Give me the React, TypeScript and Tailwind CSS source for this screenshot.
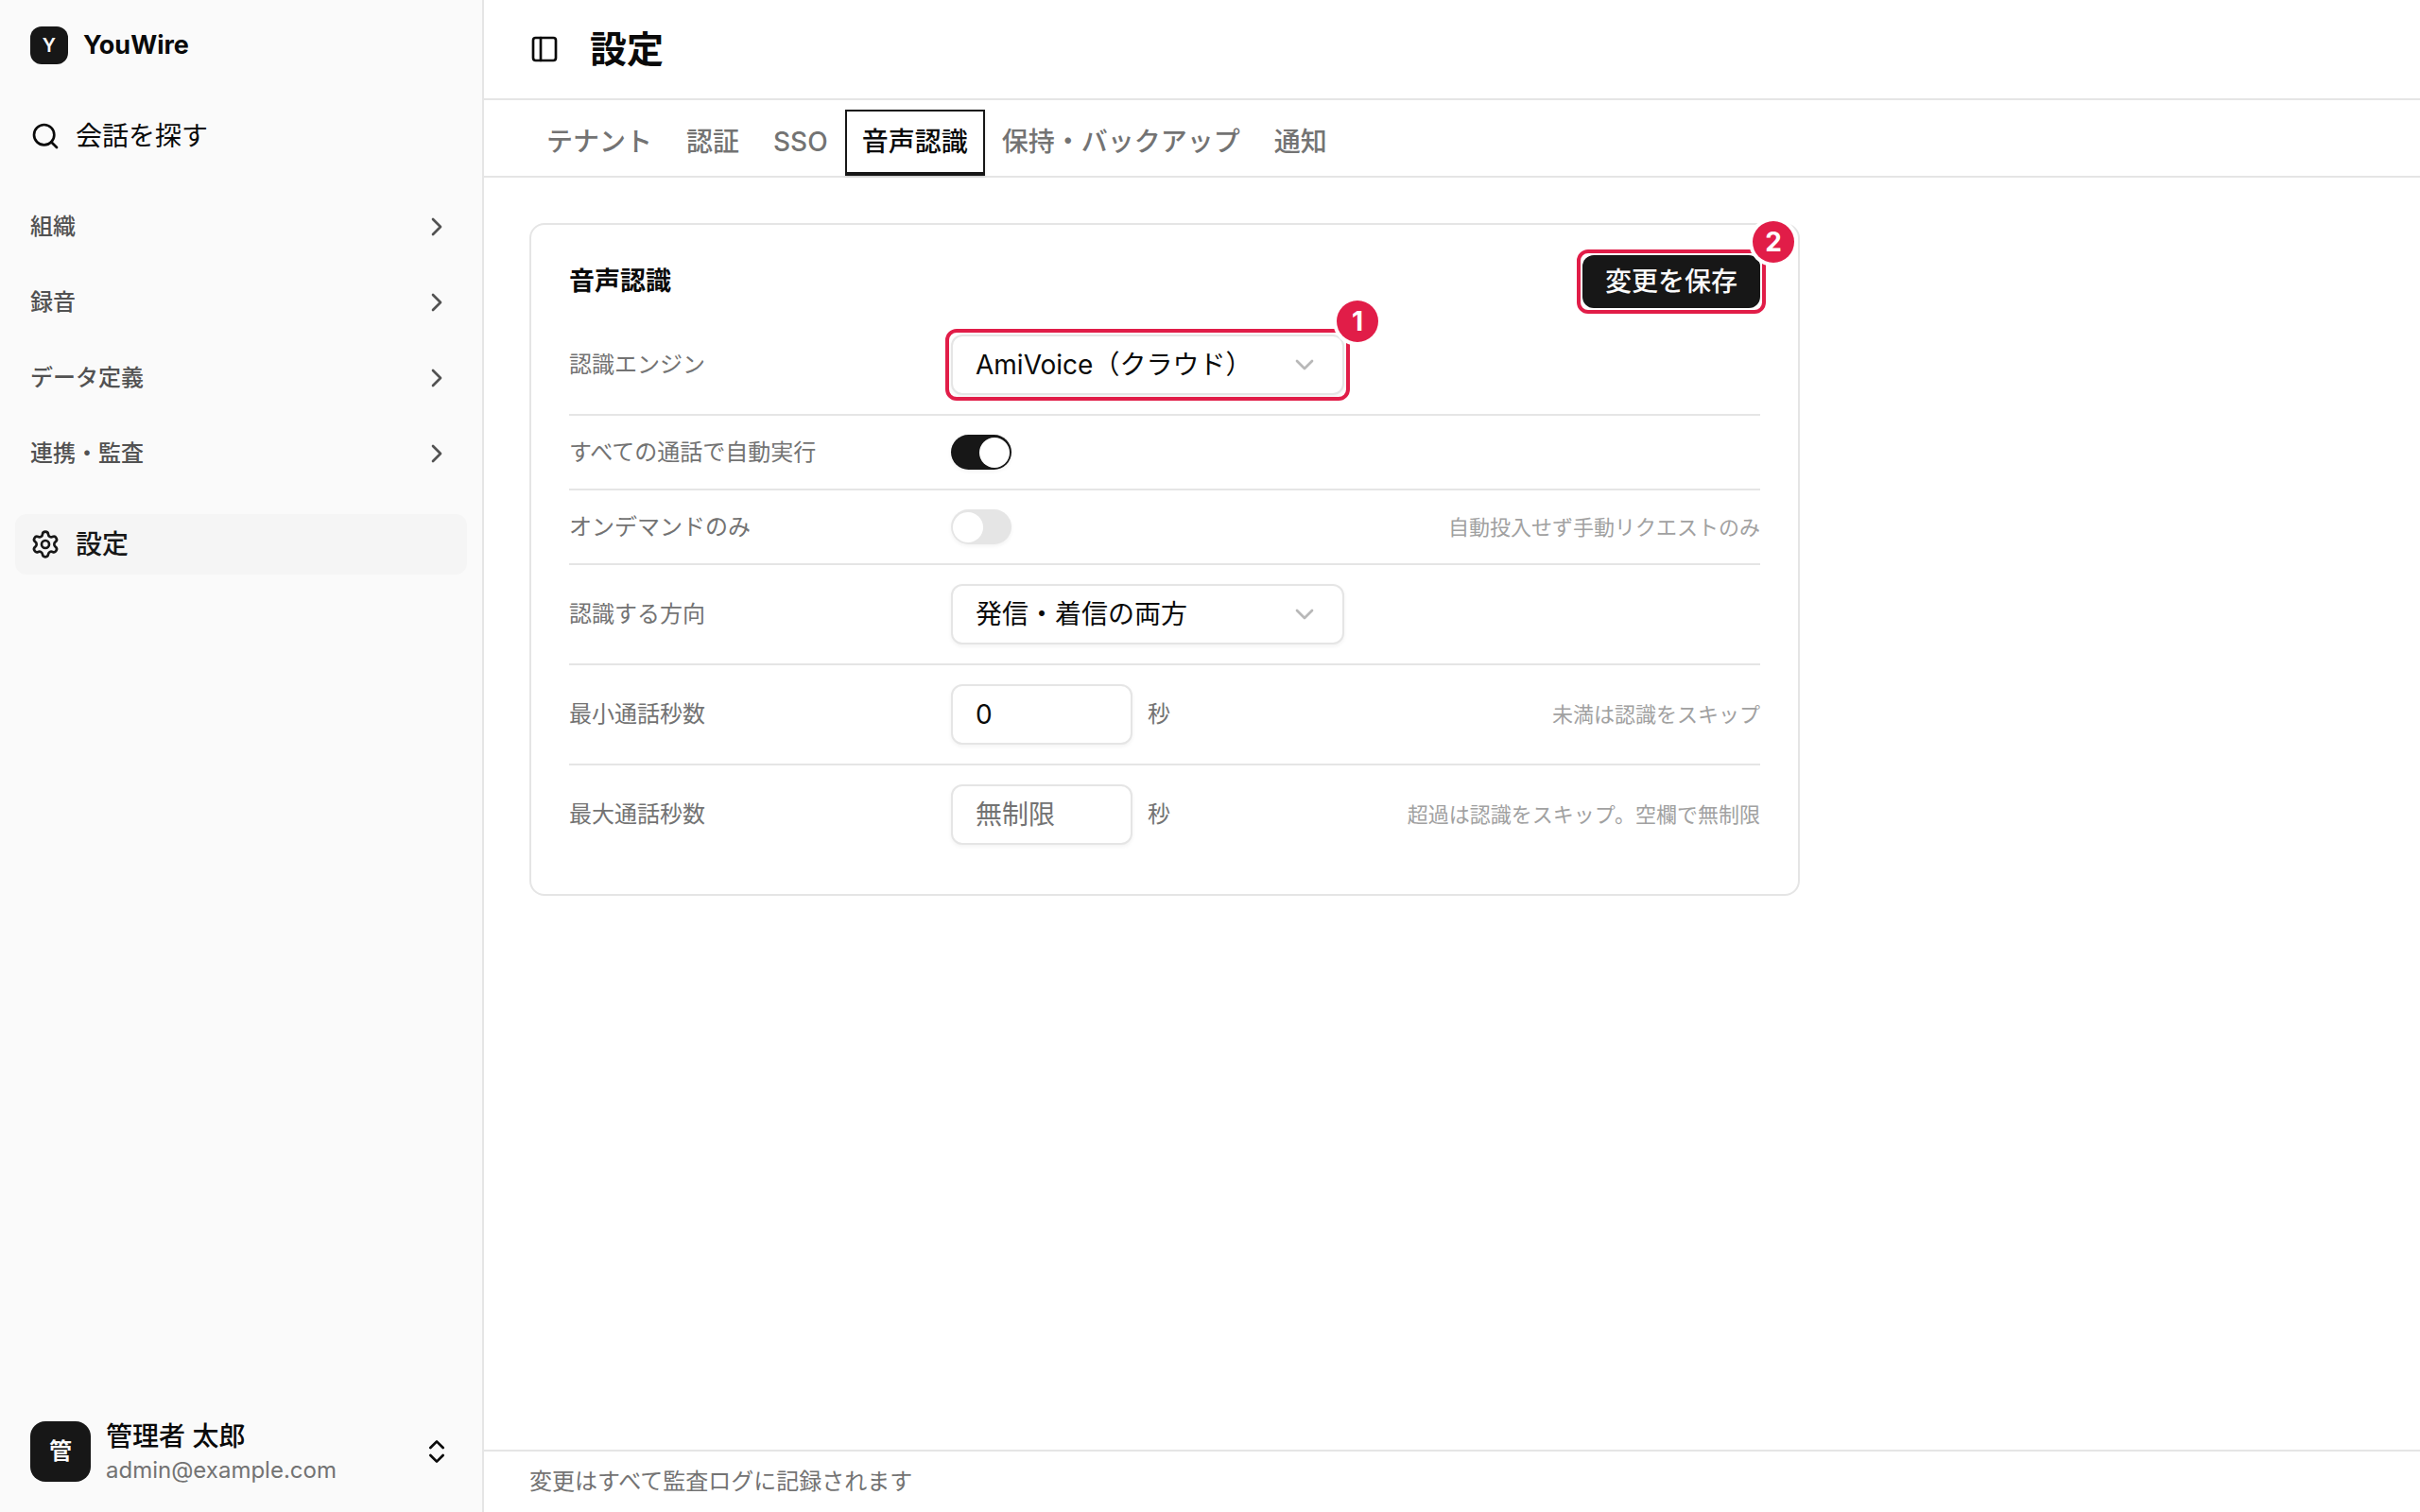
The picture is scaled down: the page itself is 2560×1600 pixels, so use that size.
import { useState } from "react";
import type { ReactNode } from "react";
import { ChevronDown, ChevronRight, ChevronsUpDown, PanelLeft, Search, Settings } from "lucide-react";

const groups = ["組織", "録音", "データ定義", "連携・監査"];
const tabs = ["テナント", "認証", "SSO", "音声認識", "保持・バックアップ", "通知"];

const Sidebar = () => {
    return (
        <aside className="flex w-128 shrink-0 flex-col border-r-2 border-neutral-200 bg-neutral-50">
            <div className="flex h-24 items-center gap-4 px-8">
                <div className="flex size-10 items-center justify-center rounded-xl bg-neutral-900 text-[20px] font-semibold text-neutral-50">Y</div>
                <span className="text-[27px] font-bold">YouWire</span>
            </div>
            <nav className="flex flex-1 flex-col gap-8 p-4">
                <a href="#search" className="flex h-16 items-center gap-4 rounded-xl px-4">
                    <Search className="size-8" />
                    <span>会話を探す</span>
                </a>
                <div className="flex flex-col gap-4">
                    {groups.map((name) => (
                        <button key={name} type="button" className="flex h-16 items-center justify-between px-4 text-2xl font-medium text-neutral-600">
                            {name}
                            <ChevronRight className="size-8" />
                        </button>
                    ))}
                </div>
                <a href="#settings" className="flex h-16 items-center gap-4 rounded-xl bg-neutral-100 px-4 font-medium text-neutral-900">
                    <Settings className="size-8" />
                    <span>設定</span>
                </a>
            </nav>
            <button type="button" className="flex h-32 items-center gap-4 px-8 text-left">
                <span className="flex size-16 items-center justify-center rounded-2xl bg-neutral-900 text-2xl font-semibold text-neutral-50">管</span>
                <span className="flex flex-1 flex-col">
                    <span className="leading-10 font-medium">管理者 太郎</span>
                    <span className="text-2xl leading-8 text-neutral-500">admin@example.com</span>
                </span>
                <ChevronsUpDown className="size-8" />
            </button>
        </aside>
    );
};

// red frame with a numbered badge around a control
const Callout = ({ no, children }: { no: number; children: ReactNode }) => {
    return (
        <div className="relative">
            {children}
            <div className="pointer-events-none absolute -inset-1.5 rounded-xl border-4 border-[#e11d48]" />
            <span className="absolute -top-9 -right-9 flex size-11 items-center justify-center rounded-full bg-[#e11d48] font-bold text-white ring-4 ring-white">{no}</span>
        </div>
    );
};

interface RowProps {
    id: string;
    label: string;
    hint?: string;
    children: ReactNode;
}

const Row = ({ id, label, hint, children }: RowProps) => {
    return (
        <div className="flex items-center gap-6 border-b-2 border-neutral-200 py-5 last:border-b-0">
            <label htmlFor={id} className="w-95 shrink-0 text-2xl text-neutral-500">{label}</label>
            <div className="flex items-center gap-4">{children}</div>
            {hint && <p className="ml-auto text-[22px] leading-8 text-neutral-400">{hint}</p>}
        </div>
    );
};

const SelectBox = ({ id, options }: { id: string; options: string[] }) => {
    return (
        <div className="relative w-104">
            <select id={id} className="block h-16 w-full appearance-none rounded-xl border-2 border-neutral-200 bg-white pr-16 pl-6 shadow-[0_2px_4px_rgba(0,0,0,0.05)]">
                {options.map((option) => (
                    <option key={option}>{option}</option>
                ))}
            </select>
            <ChevronDown className="pointer-events-none absolute top-4 right-6.5 size-8 text-neutral-500 opacity-50" />
        </div>
    );
};

const Toggle = ({ id, on }: { id: string; on: boolean }) => {
    const [checked, setChecked] = useState(on);

    return (
        <input
            id={id}
            type="checkbox"
            role="switch"
            checked={checked}
            onChange={(e) => setChecked(e.target.checked)}
            className="flex h-[37px] w-16 appearance-none items-center rounded-full bg-neutral-200 px-0.5 shadow-[0_2px_4px_rgba(0,0,0,0.05)] before:size-8 before:rounded-full before:bg-white checked:justify-end checked:bg-neutral-900"
        />
    );
};

const SecondsInput = ({ id, value, placeholder }: { id: string; value?: string; placeholder?: string }) => {
    return (
        <>
            <input id={id} type="text" inputMode="numeric" defaultValue={value} placeholder={placeholder} className="h-16 w-48 rounded-xl border-2 border-neutral-200 bg-white px-6 shadow-[0_2px_4px_rgba(0,0,0,0.05)] placeholder:text-neutral-500" />
            <span className="text-2xl text-neutral-500">秒</span>
        </>
    );
};

const App = () => {
    const [tab, setTab] = useState("音声認識");

    return (
        <div lang="ja" className="flex min-h-screen bg-white font-[Inter,'Noto_Sans_CJK_JP',sans-serif] text-[28px] leading-10 text-neutral-950">
            <Sidebar />
            <div className="flex min-w-0 flex-1 flex-col">
                <header className="flex items-center gap-8 border-b-2 border-neutral-200 px-12 py-6">
                    <button type="button" aria-label="サイドバー"><PanelLeft className="size-8" /></button>
                    <h1 className="text-[39px] leading-14 font-semibold">設定</h1>
                </header>
                <div role="tablist" className="flex border-b-2 border-neutral-200 px-12 pt-2.5">
                    {tabs.map((name) => (
                        <button
                            key={name}
                            type="button"
                            role="tab"
                            aria-selected={tab === name}
                            onClick={() => setTab(name)}
                            className={`border-2 border-b-4 px-4 py-3 font-medium ${tab === name ? "border-neutral-900 bg-white shadow-sm" : "border-transparent text-neutral-500"}`}
                        >
                            {name}
                        </button>
                    ))}
                </div>
                <main className="flex-1 p-12">
                    <section className="max-w-336 rounded-2xl border-2 border-neutral-200 bg-white px-10 py-8">
                        <div className="mb-2 flex items-center justify-between">
                            <h2 className="text-[27px] font-semibold">音声認識</h2>
                            <Callout no={2}>
                                <button type="button" className="flex h-14 items-center rounded-xl bg-neutral-900 px-6 font-medium text-neutral-50">変更を保存</button>
                            </Callout>
                        </div>
                        <Row id="engine" label="認識エンジン">
                            <Callout no={1}>
                                <SelectBox id="engine" options={["AmiVoice（クラウド）"]} />
                            </Callout>
                        </Row>
                        <Row id="auto" label="すべての通話で自動実行">
                            <Toggle id="auto" on={true} />
                        </Row>
                        <Row id="ondemand" label="オンデマンドのみ" hint="自動投入せず手動リクエストのみ">
                            <Toggle id="ondemand" on={false} />
                        </Row>
                        <Row id="direction" label="認識する方向">
                            <SelectBox id="direction" options={["発信・着信の両方"]} />
                        </Row>
                        <Row id="min" label="最小通話秒数" hint="未満は認識をスキップ">
                            <SecondsInput id="min" value="0" />
                        </Row>
                        <Row id="max" label="最大通話秒数" hint="超過は認識をスキップ。空欄で無制限">
                            <SecondsInput id="max" placeholder="無制限" />
                        </Row>
                    </section>
                </main>
                <footer className="border-t-2 border-neutral-200 px-12 py-4 text-2xl text-neutral-500">変更はすべて監査ログに記録されます</footer>
            </div>
        </div>
    );
};

export default App;
